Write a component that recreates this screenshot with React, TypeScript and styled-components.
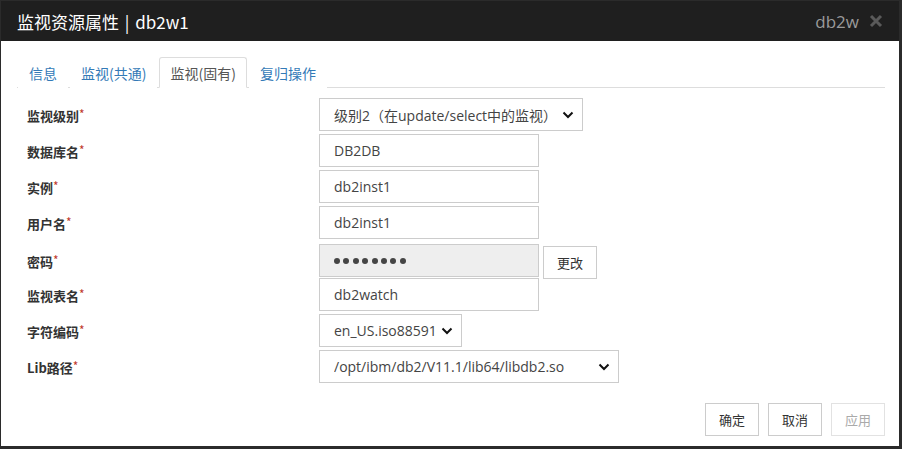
import React from 'react';
import styled, { createGlobalStyle } from 'styled-components';

const GlobalStyle = createGlobalStyle`
  html, body {
    margin: 0;
    padding: 0;
    background: #2b2b2b;
    font-family: "Open Sans", "Noto Sans CJK SC", sans-serif;
  }
`;

const Dialog = styled.div`
  margin: 1px 3px 3px 1px;
  width: 898px;
  height: 445px;
  background: #fff;
  display: flex;
  flex-direction: column;
`;

const Header = styled.div`
  height: 40px;
  background: #1f1f1f;
  display: flex;
  align-items: center;
  padding: 0 16px 0 16px;
  color: #fff;
`;

const Title = styled.div`
  flex: 1;
  font-size: 17px;
  font-family: "Noto Sans CJK SC", sans-serif;
  word-spacing: 2px;
`;

const Sub = styled.div`
  font-size: 17px;
  color: #9a9a9a;
  margin-right: 10px;
`;

const Close = styled.div`
  width: 14px;
  height: 14px;
  display: flex;
`;

const Body = styled.div`
  flex: 1;
  display: flex;
  flex-direction: column;
  padding: 16px 14px 10px 16px;
`;

const Tabs = styled.div`
  display: flex;
  border-bottom: 1px solid #ddd;
  height: 30px;
  padding-left: 1px;
`;

const Tab = styled.div<{ $active?: boolean }>`
  font-family: "Noto Sans CJK SC", sans-serif;
  font-size: 14px;
  padding: 0 10px;
  margin-right: 2px;
  line-height: 30px;
  color: ${p => (p.$active ? '#555' : '#337ab7')};
  border: 1px solid ${p => (p.$active ? '#ddd' : 'transparent')};
  border-bottom-color: ${p => (p.$active ? '#fff' : 'transparent')};
  border-radius: 3px 3px 0 0;
  background: #fff;
  box-sizing: border-box;
  margin-bottom: -1px;
  height: 31px;
`;

const Form = styled.div`
  display: flex;
  flex-direction: column;
  gap: 3px;
  padding: 10px 0 0 10px;
`;

const Row = styled.div`
  display: grid;
  grid-template-columns: 292px auto;
  align-items: center;
  height: 33px;
`;

const Label = styled.div`
  font-family: "Noto Sans CJK SC", sans-serif;
  font-weight: bold;
  font-size: 13px;
  color: #333;
`;

const Star = styled.span`
  color: #c0392b;
  font-weight: normal;
  vertical-align: 2px;
  font-size: 12px;
`;

const Field = styled.div`
  display: flex;
  align-items: center;
  gap: 4px;
`;

const Box = styled.div<{ $w: number; $disabled?: boolean }>`
  width: ${p => p.$w}px;
  height: 33px;
  box-sizing: border-box;
  border: 1px solid #ccc;
  background: ${p => (p.$disabled ? '#eee' : '#fff')};
  display: flex;
  align-items: center;
  padding: 0 8px 0 14px;
  font-size: 14px;
  color: #444;
  font-family: "Open Sans", "Noto Sans CJK SC", sans-serif;
`;

const BoxText = styled.span`
  flex: 1;
  white-space: nowrap;
  overflow: hidden;
`;

const Dots = styled.div`
  display: flex;
  gap: 3.4px;
`;

const Dot = styled.span`
  width: 6px;
  height: 6px;
  border-radius: 50%;
  background: #444;
`;

const Btn = styled.div<{ $disabled?: boolean; $offset?: number }>`
  width: 54px;
  height: 33px;
  box-sizing: border-box;
  border: 1px solid ${p => (p.$disabled ? '#e2e2e2' : '#ccc')};
  color: ${p => (p.$disabled ? '#aaa' : '#333')};
  display: flex;
  align-items: center;
  justify-content: center;
  font-size: 13px;
  font-family: "Noto Sans CJK SC", sans-serif;
  background: #fff;
  margin-top: ${p => p.$offset ?? 0}px;
`;

const Footer = styled.div`
  margin-top: auto;
  display: flex;
  justify-content: flex-end;
  gap: 9px;
`;

const Chevron = () => (
  <svg width="12" height="8" viewBox="0 0 12 8">
    <path d="M1.5 1.5 L6 6 L10.5 1.5" fill="none" stroke="#111" strokeWidth="2" />
  </svg>
);

const CloseIcon = () => (
  <svg width="14" height="14" viewBox="0 0 14 14">
    <path d="M2 2 L12 12 M12 2 L2 12" stroke="#5a5a5a" strokeWidth="3" />
  </svg>
);

const Req: React.FC<{ text: string }> = ({ text }) => (
  <Label>
    {text}
    <Star>*</Star>
  </Label>
);

const App: React.FC = () => (
  <>
    <GlobalStyle />
    <Dialog>
      <Header>
        <Title>监视资源属性 | db2w1</Title>
        <Sub>db2w</Sub>
        <Close>
          <CloseIcon />
        </Close>
      </Header>
      <Body>
        <Tabs>
          <Tab>信息</Tab>
          <Tab>监视(共通)</Tab>
          <Tab $active>监视(固有)</Tab>
          <Tab>复归操作</Tab>
        </Tabs>
        <Form>
          <Row>
            <Req text="监视级别" />
            <Field>
              <Box $w={264}>
                <BoxText>级别2（在update/select中的监视）</BoxText>
                <Chevron />
              </Box>
            </Field>
          </Row>
          <Row>
            <Req text="数据库名" />
            <Field>
              <Box $w={220}>
                <BoxText>DB2DB</BoxText>
              </Box>
            </Field>
          </Row>
          <Row>
            <Req text="实例" />
            <Field>
              <Box $w={220}>
                <BoxText>db2inst1</BoxText>
              </Box>
            </Field>
          </Row>
          <Row>
            <Req text="用户名" />
            <Field>
              <Box $w={220}>
                <BoxText>db2inst1</BoxText>
              </Box>
            </Field>
          </Row>
          <Row>
            <Req text="密码" />
            <Field>
              <Box $w={220} $disabled>
                <Dots>
                  {Array.from({ length: 8 }).map((_, i) => (
                    <Dot key={i} />
                  ))}
                </Dots>
              </Box>
              <Btn $offset={4}>更改</Btn>
            </Field>
          </Row>
          <Row>
            <Req text="监视表名" />
            <Field>
              <Box $w={220}>
                <BoxText>db2watch</BoxText>
              </Box>
            </Field>
          </Row>
          <Row>
            <Req text="字符编码" />
            <Field>
              <Box $w={143}>
                <BoxText>en_US.iso88591</BoxText>
                <Chevron />
              </Box>
            </Field>
          </Row>
          <Row>
            <Req text="Lib路径" />
            <Field>
              <Box $w={300}>
                <BoxText>/opt/ibm/db2/V11.1/lib64/libdb2.so</BoxText>
                <Chevron />
              </Box>
            </Field>
          </Row>
        </Form>
        <Footer>
          <Btn>确定</Btn>
          <Btn>取消</Btn>
          <Btn $disabled>应用</Btn>
        </Footer>
      </Body>
    </Dialog>
  </>
);

export default App;
